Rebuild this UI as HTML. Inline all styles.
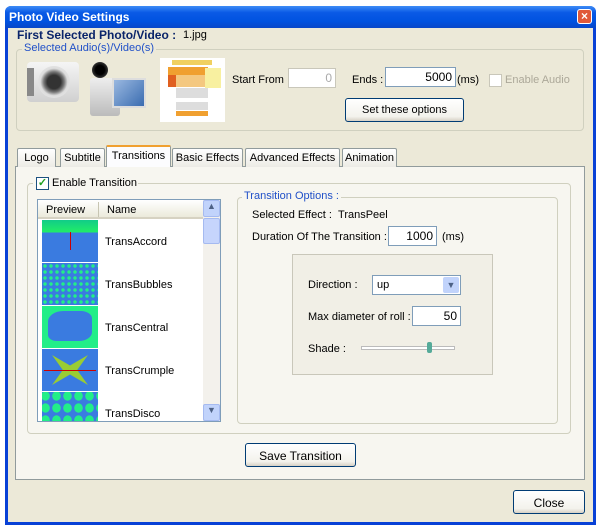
<!DOCTYPE html>
<html><head><style>
*{box-sizing:border-box;margin:0;padding:0}
body{width:600px;height:532px;background:#fff;font-family:"Liberation Sans",sans-serif;font-size:11px;color:#000;position:relative;overflow:hidden}
.a{position:absolute}
.win{left:5px;top:6px;width:591px;height:519px;background:#0841d6;border-radius:6px 6px 0 0}
.title{left:5px;top:6px;width:591px;height:22px;background:linear-gradient(#3d8cf6,#0a5ae6 30%,#0052e0 70%,#0847c8);border-radius:6px 6px 0 0;color:#fff;font-weight:bold;font-size:12px;padding:4px 0 0 4px}
.client{left:8px;top:28px;width:585px;height:494px;background:#ece9d8}
.grp{border:1px solid #d0d0bf;border-radius:4px}
.leg{background:#ece9d8;color:#2050c8;padding:0 2px}
.inp{background:#fff;border:1px solid #7f9db9;text-align:right;padding:2px 3px 0 0;font-size:12px}
.btn{border:1px solid #003c74;border-radius:3px;background:linear-gradient(#fff,#f3f2ec 80%,#d6d0c5);text-align:center;font-size:11px}
.tab{top:148px;height:19px;border:1px solid #919b9c;border-bottom:none;background:linear-gradient(#fff,#ecebe5);text-align:center;padding-top:3px;border-radius:2px 2px 0 0}
.row{left:42px;width:56px;height:42px}
.nm{left:105px;font-size:11px}
</style></head><body>
<div class="a win"></div>
<div class="a title">Photo Video Settings</div>
<div class="a" style="left:577px;top:9px;width:15px;height:15px;background:#e0593a;border:1px solid #fff;border-radius:3px;color:#fff;font-size:12px;font-weight:bold;text-align:center;line-height:13px">×</div>
<div class="a client"></div>

<div class="a" style="left:17px;top:28px;font-weight:bold;color:#0a246a;font-size:12px">First Selected Photo/Video :</div>
<div class="a" style="left:183px;top:29px;font-size:11px">1.jpg</div>
<div class="a grp" style="left:16px;top:49px;width:568px;height:82px"></div>
<div class="a leg" style="left:22px;top:42px">Selected Audio(s)/Video(s)</div>

<div class="a" style="left:27px;top:62px;width:52px;height:40px;background:linear-gradient(#f5f5f5,#d0d0d0);border-radius:4px"></div>
<div class="a" style="left:27px;top:68px;width:7px;height:28px;background:#888"></div>
<div class="a" style="left:38px;top:66px;width:32px;height:32px;border-radius:50%;background:radial-gradient(#333 30%,#777 45%,#ddd 60%,#eee)"></div>
<div class="a" style="left:92px;top:62px;width:16px;height:16px;border-radius:50%;background:radial-gradient(#000 40%,#666)"></div>
<div class="a" style="left:90px;top:78px;width:30px;height:38px;background:linear-gradient(#eee,#bbb);border-radius:3px"></div>
<div class="a" style="left:112px;top:78px;width:34px;height:30px;background:linear-gradient(135deg,#9ab8e0,#3a6cb0);border:2px solid #ddd"></div>
<div class="a" style="left:160px;top:58px;width:65px;height:64px;background:#fff"></div>
<div class="a" style="left:172px;top:60px;width:40px;height:5px;background:#f0d060"></div>
<div class="a" style="left:168px;top:67px;width:40px;height:8px;background:#f0a030"></div>
<div class="a" style="left:168px;top:75px;width:8px;height:12px;background:#e06020"></div>
<div class="a" style="left:176px;top:75px;width:36px;height:12px;background:#f4c880"></div>
<div class="a" style="left:205px;top:68px;width:16px;height:20px;background:#f8f0a0"></div>
<div class="a" style="left:176px;top:88px;width:32px;height:10px;background:#ddd"></div>
<div class="a" style="left:176px;top:102px;width:32px;height:8px;background:#ddd"></div>
<div class="a" style="left:176px;top:111px;width:32px;height:5px;background:#f0a030"></div>

<div class="a" style="left:232px;top:74px">Start From :</div>
<div class="a inp" style="left:288px;top:68px;width:48px;height:20px;color:#aaa;border-color:#c9c7ba">0</div>
<div class="a" style="left:352px;top:74px">Ends :</div>
<div class="a inp" style="left:385px;top:67px;width:71px;height:20px">5000</div>
<div class="a" style="left:457px;top:74px">(ms)</div>
<div class="a" style="left:489px;top:74px;width:13px;height:13px;border:1px solid #c9c7ba;background:#fff"></div>
<div class="a" style="left:505px;top:74px;color:#aca899">Enable Audio</div>
<div class="a btn" style="left:345px;top:98px;width:119px;height:24px;padding-top:5px">Set these options</div>

<div class="a" style="left:15px;top:166px;width:570px;height:314px;border:1px solid #919b9c;background:#f7f6f0"></div>
<div class="a tab" style="left:17px;width:39px">Logo</div>
<div class="a tab" style="left:60px;width:45px">Subtitle</div>
<div class="a tab" style="left:106px;top:145px;width:65px;height:22px;background:#fcfcfe;border-top:2px solid #f0a030;border-bottom:none">Transitions</div>
<div class="a tab" style="left:172px;width:71px">Basic Effects</div>
<div class="a tab" style="left:245px;width:95px">Advanced Effects</div>
<div class="a tab" style="left:342px;width:55px">Animation</div>

<div class="a grp" style="left:27px;top:183px;width:544px;height:251px"></div>
<div class="a" style="left:33px;top:176px;width:105px;height:14px;background:#f7f6f0"></div>
<div class="a" style="left:36px;top:177px;width:13px;height:13px;border:1px solid #1c5180;background:#fff;color:#21a121;font-size:11px;line-height:11px;text-align:center;font-weight:bold">✓</div>
<div class="a" style="left:52px;top:177px">Enable Transition</div>

<div class="a" style="left:37px;top:199px;width:184px;height:223px;border:1px solid #7f9db9;background:#fff;overflow:hidden"></div>
<div class="a" style="left:38px;top:200px;width:165px;height:19px;background:linear-gradient(#fff,#ebeadb);border-bottom:2px solid #d6d2c2"></div>
<div class="a" style="left:46px;top:204px">Preview</div>
<div class="a" style="left:98px;top:202px;width:1px;height:15px;background:#c7c5b2"></div>
<div class="a" style="left:107px;top:204px">Name</div>
<div class="a" style="left:203px;top:200px;width:17px;height:221px;background:#f3f1ec"></div>
<div class="a" style="left:203px;top:200px;width:17px;height:17px;background:#c1d3fb;border:1px solid #a5baf0;border-radius:2px;font-size:9px;text-align:center;color:#4d6185">▲</div>
<div class="a" style="left:203px;top:218px;width:17px;height:26px;background:#c6d5fc;border:1px solid #a5baf0;border-radius:2px"></div>
<div class="a" style="left:203px;top:404px;width:17px;height:17px;background:#c1d3fb;border:1px solid #a5baf0;border-radius:2px;font-size:9px;text-align:center;color:#4d6185">▼</div>

<div class="a row" style="top:220px;background:linear-gradient(#1c8 0,#2e6 30%,#3a7be0 30%)"></div>
<div class="a" style="left:70px;top:232px;width:1px;height:18px;background:#c00"></div>
<div class="a nm" style="top:236px">TransAccord</div>
<div class="a row" style="top:263px;background:#3a7be0 radial-gradient(#2e8 1.5px,transparent 2px) 0 0/6px 6px"></div>
<div class="a nm" style="top:279px">TransBubbles</div>
<div class="a row" style="top:306px;background:#2e8"></div>
<div class="a" style="left:48px;top:311px;width:44px;height:30px;background:#3a7be0;border-radius:35% 25% 30% 20%"></div>
<div class="a nm" style="top:322px">TransCentral</div>
<div class="a row" style="top:349px;background:#3a7be0"></div>
<div class="a" style="left:52px;top:355px;width:36px;height:30px;background:#9c3;clip-path:polygon(0 0,50% 35%,100% 0,70% 50%,100% 100%,50% 65%,0 100%,30% 50%)"></div>
<div class="a" style="left:44px;top:370px;width:52px;height:1px;background:#c00"></div>
<div class="a nm" style="top:365px">TransCrumple</div>
<div class="a row" style="top:392px;height:29px;background:#3a7be0 radial-gradient(#2e8 4px,transparent 4.5px) -2px -2px/11px 12px"></div>
<div class="a nm" style="top:408px">TransDisco</div>

<div class="a grp" style="left:237px;top:197px;width:321px;height:227px"></div>
<div class="a leg" style="left:242px;top:190px;background:#f7f6f0">Transition Options :</div>
<div class="a" style="left:252px;top:209px">Selected Effect :&nbsp;&nbsp;TransPeel</div>
<div class="a" style="left:252px;top:231px">Duration Of The Transition :</div>
<div class="a inp" style="left:388px;top:226px;width:49px;height:20px">1000</div>
<div class="a" style="left:442px;top:231px">(ms)</div>
<div class="a" style="left:292px;top:254px;width:201px;height:121px;border:1px solid #c9c7ba;background:#f1efe6"></div>
<div class="a" style="left:308px;top:279px">Direction :</div>
<div class="a" style="left:372px;top:275px;width:89px;height:20px;border:1px solid #7f9db9;background:#fff;padding:3px 0 0 4px">up</div>
<div class="a" style="left:443px;top:277px;width:16px;height:16px;background:#c1d3fb;border-radius:2px;font-size:9px;text-align:center;color:#4d6185;line-height:16px">▼</div>
<div class="a" style="left:308px;top:311px">Max diameter of roll :</div>
<div class="a inp" style="left:412px;top:306px;width:49px;height:20px">50</div>
<div class="a" style="left:308px;top:343px">Shade :</div>
<div class="a" style="left:361px;top:346px;width:94px;height:4px;border:1px solid #bbb;background:#fff"></div>
<div class="a" style="left:427px;top:342px;width:5px;height:11px;background:#5a9;border-radius:2px"></div>

<div class="a btn" style="left:245px;top:443px;width:111px;height:24px;padding-top:5px;font-size:12px">Save Transition</div>
<div class="a btn" style="left:513px;top:490px;width:72px;height:24px;padding-top:5px;font-size:12px">Close</div>
</body></html>
